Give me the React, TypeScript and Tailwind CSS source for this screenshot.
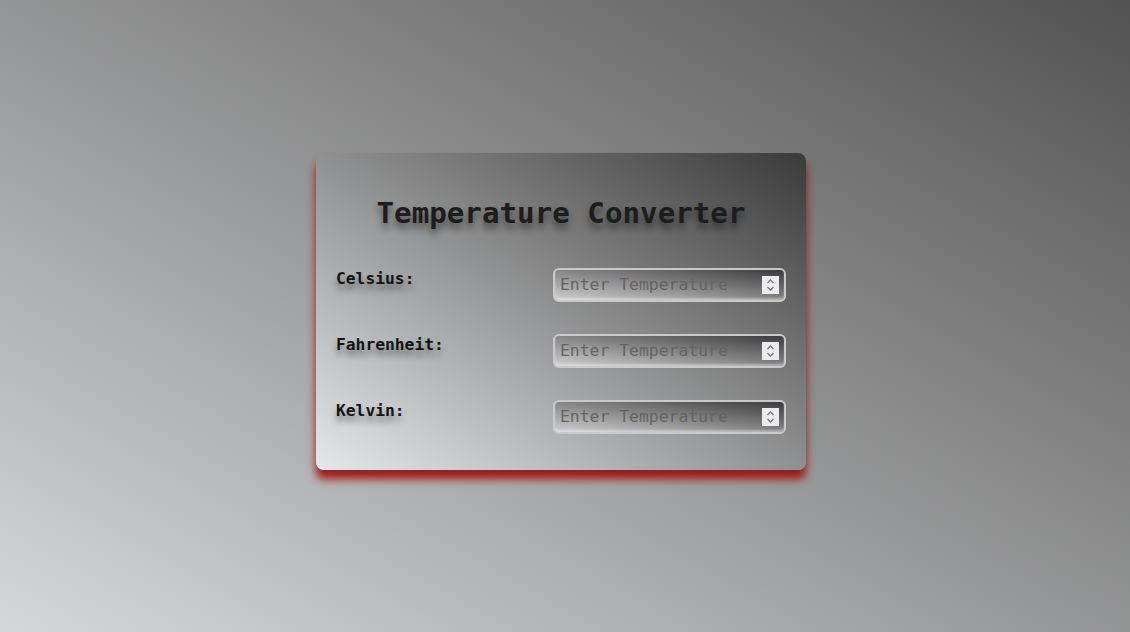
import { useState } from "react"

const scales = ["Celsius", "Fahrenheit", "Kelvin"] as const

function Spinner() {
  return (
    <span className="pointer-events-none absolute top-1/2 right-[7px] flex h-[18px] w-[17px] -translate-y-1/2 items-center justify-center bg-[#ececf0]">
      <svg width="9" height="14" viewBox="0 0 9 14" fill="none" stroke="#7a7a7a" strokeWidth="1.3">
        <path d="M1.5 5 L4.5 2 L7.5 5" />
        <path d="M1.5 9 L4.5 12 L7.5 9" />
      </svg>
    </span>
  )
}

export default function App() {
  const [values, setValues] = useState<Record<string, string>>({})

  return (
    <div className="flex min-h-screen items-center justify-center bg-[linear-gradient(to_top_right,#d6d7d9,#525252)] font-['DejaVu_Sans_Mono',monospace]">
      <div className="mr-[8px] mb-[10px] w-[490px] rounded-[8px] bg-[linear-gradient(to_top_right,#e6e7e9,#3a3a3a)] px-5 pt-5 pb-9 shadow-[0_9px_9px_rgba(155,10,10,0.9)]">
        <h1 className="mt-[23px] mb-[38px] text-center text-[29.2px] leading-[34px] font-bold text-[#1d1d1d] [text-shadow:0_6px_7px_rgba(0,0,0,0.45)]">
          Temperature Converter
        </h1>
        <div className="flex flex-col gap-8">
          {scales.map((s) => (
            <div key={s} className="flex items-start justify-between">
              <label className="pt-[1px] text-[16.3px] leading-5 font-bold text-[#141414] [text-shadow:0_6px_6px_rgba(0,0,0,0.4)]">
                {s}:
              </label>
              <div className="relative">
                <input
                  type="text"
                  value={values[s] ?? ""}
                  onChange={(e) => setValues({ ...values, [s]: e.target.value })}
                  placeholder="Enter Temperature"
                  className="h-[34px] w-[233px] rounded-[6px] border-2 border-[#c9c9c9] bg-[linear-gradient(to_top_right,#cfcfcf,#3c3c3c)] px-[5px] text-[16.4px] text-[#222] shadow-[inset_0_-2px_2px_rgba(255,255,255,0.35)] outline-none placeholder:text-[#646464]"
                />
                <Spinner />
              </div>
            </div>
          ))}
        </div>
      </div>
    </div>
  )
}
